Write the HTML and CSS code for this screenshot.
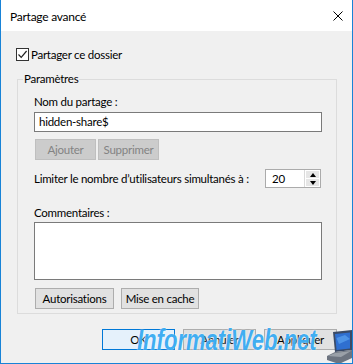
FILE: index.html
```html
<!DOCTYPE html>
<html lang="fr">
<head>
    <meta charset="UTF-8">
    <title>Partage avancé</title>
    <link rel="stylesheet" href="styles.css">
</head>
<body>
    <div class="window">
        <div class="titlebar">
            <span class="title">Partage avancé</span>
            <svg class="close" width="10" height="10" viewBox="0 0 10 10">
                <path d="M0.5 0.5 L9.5 9.5 M9.5 0.5 L0.5 9.5" stroke="#000" stroke-width="1"/>
            </svg>
        </div>

        <div class="content">
            <label class="check-row">
                <span class="checkbox">
                    <svg width="11" height="11" viewBox="0 0 11 11">
                        <path d="M1.5 5.5 L4.2 8.3 L9.6 2" fill="none" stroke="#222" stroke-width="1.2"/>
                    </svg>
                </span>
                Partager ce dossier
            </label>

            <fieldset class="group">
                <legend>Paramètres</legend>

                <div class="field-label">Nom du partage :</div>
                <div class="textbox">hidden-share$</div>

                <div class="btn-row">
                    <button class="btn btn-disabled btn-small">Ajouter</button>
                    <button class="btn btn-disabled btn-small">Supprimer</button>
                </div>

                <div class="limit-row">
                    <span>Limiter le nombre d’utilisateurs simultanés à :</span>
                    <div class="spinner">
                        <span class="spinner-value">20</span>
                        <div class="spinner-arrows">
                            <span class="arrow arrow-up"></span>
                            <span class="arrow arrow-down"></span>
                        </div>
                    </div>
                </div>

                <div class="field-label comments-label">Commentaires :</div>
                <div class="textarea"></div>

                <div class="btn-row btn-row-bottom">
                    <button class="btn btn-auth">Autorisations</button>
                    <button class="btn btn-cache">Mise en cache</button>
                </div>
            </fieldset>

            <div class="footer">
                <button class="btn btn-footer btn-default">OK</button>
                <button class="btn btn-footer">Annuler</button>
                <button class="btn btn-footer">Appliquer</button>
            </div>
        </div>

        <div class="watermark">
            <span class="watermark-text">InformatiWeb.net</span>
            <svg class="laptop" width="30" height="34" viewBox="0 0 26 34">
                <polygon points="6,2 25,0 25,20 8,22" fill="#3a4a66"/>
                <polygon points="8,4 23,2.5 23,18.5 9.5,20" fill="#2f6fd0"/>
                <polygon points="9.5,8 18,5 23,9 12,14" fill="#5aa3f0" opacity="0.7"/>
                <polygon points="0,26 8,22 25,20 25,28 12,34 0,30" fill="#6d7480"/>
                <polygon points="1,26 8,23 24,21 14,27" fill="#9aa0a8"/>
            </svg>
        </div>
    </div>
</body>
</html>
```

FILE: styles.css
```css
:root {
    --win-blue: #1883d7;
    --panel: #f0f0f0;
    --btn-bg: #e1e1e1;
    --btn-border: #adadad;
    --field-border: #7a7a7a;
}

* {
    box-sizing: border-box;
}

body {
    margin: 0;
    font-family: Lato, 'Noto Sans', sans-serif;
    font-size: 11.5px;
    letter-spacing: -0.25px;
    color: #000;
    background-color: var(--panel);
}

.window {
    position: relative;
    width: 353px;
    height: 364px;
    border: 1px solid var(--win-blue);
    border-top: none;
    background-color: var(--panel);
    overflow: hidden;
}

.titlebar {
    height: 31px;
    background-color: #fff;
    display: flex;
    align-items: center;
    justify-content: space-between;
    padding: 0 9px 0 9px;
}

.title {
    font-size: 12px;
    margin-top: 1px;
}

.close {
    display: block;
}

.content {
    padding: 0 15px 0 15px;
}

.check-row {
    display: flex;
    align-items: center;
    gap: 2px;
    height: 16px;
    margin-top: 15px;
    white-space: nowrap;
}

.checkbox {
    width: 13px;
    height: 13px;
    border: 1px solid #333;
    background-color: #fff;
    display: flex;
    align-items: center;
    justify-content: center;
}

.checkbox svg {
    display: block;
}

.group {
    margin: 9px 0 0 1px;
    width: 320px;
    height: 243px;
    border: 1px solid #dcdcdc;
    padding: 0 14px 0 16px;
}

.group legend {
    padding: 0 1px;
    margin-left: -11px;
    line-height: 16px;
}

.field-label {
    line-height: 16px;
    margin-top: 7px;
    white-space: nowrap;
}

.textbox,
.textarea {
    width: 288px;
    border: 1px solid var(--field-border);
    background-color: #fff;
}

.textbox {
    height: 20px;
    margin-top: 2px;
    padding: 1px 0 0 4px;
    line-height: 16px;
}

.textarea {
    height: 58px;
    margin-top: 1px;
}

.btn {
    font-family: inherit;
    font-size: 11.5px;
    letter-spacing: -0.25px;
    color: #000;
    background-color: var(--btn-bg);
    border: 1px solid var(--btn-border);
    padding: 0;
    height: 21px;
    white-space: nowrap;
}

.btn-row {
    display: flex;
    gap: 2px;
    margin: 7px 0 0 1px;
}

.btn-small {
    width: 61px;
}

.btn-disabled {
    background-color: #cccccc;
    border-color: #bfbfbf;
    color: #838383;
}

.limit-row {
    display: flex;
    align-items: center;
    justify-content: space-between;
    width: 287px;
    margin-top: 9px;
    white-space: nowrap;
}

.spinner {
    display: flex;
    width: 56px;
    height: 19px;
    border: 1px solid #ababab;
    background-color: #fff;
}

.spinner-value {
    flex: 1;
    padding: 1px 0 0 6px;
    line-height: 16px;
}

.spinner-arrows {
    width: 16px;
    display: flex;
    flex-direction: column;
    gap: 1px;
    padding: 1px;
    border-left: 1px solid #dadada;
}

.arrow {
    flex: 1;
    background-color: #e6e6e6;
    display: flex;
    align-items: center;
    justify-content: center;
}

.arrow::after {
    content: "";
    border-left: 3px solid transparent;
    border-right: 3px solid transparent;
}

.arrow-up::after {
    border-bottom: 4px solid #000;
}

.arrow-down::after {
    border-top: 4px solid #000;
}

.comments-label {
    margin-top: 17px;
}

.btn-row-bottom {
    gap: 7px;
    margin-top: 8px;
}

.btn-auth {
    width: 79px;
}

.btn-cache {
    width: 78px;
}

.footer {
    display: flex;
    justify-content: flex-end;
    gap: 8px;
    margin-top: 15px;
}

.btn-footer {
    width: 73px;
    height: 21px;
}

.btn-default {
    border-color: #0078d7;
    background-color: #e5f1fb;
}

.watermark {
    position: absolute;
    left: 136px;
    bottom: 0;
    display: flex;
    align-items: flex-end;
    gap: 4px;
    pointer-events: none;
}

.watermark-text {
    font-family: 'Liberation Sans', Arial, sans-serif;
    font-weight: bold;
    font-style: italic;
    font-size: 29px;
    letter-spacing: 0;
    line-height: 34px;
    color: rgba(30, 160, 240, 0.85);
    text-shadow: 0 0 2px #fff;
    display: inline-block;
    transform: scaleX(0.76);
    transform-origin: left center;
    width: 184px;
    margin-bottom: 6px;
}

.laptop {
    display: block;
    margin-bottom: -1px;
}
```
